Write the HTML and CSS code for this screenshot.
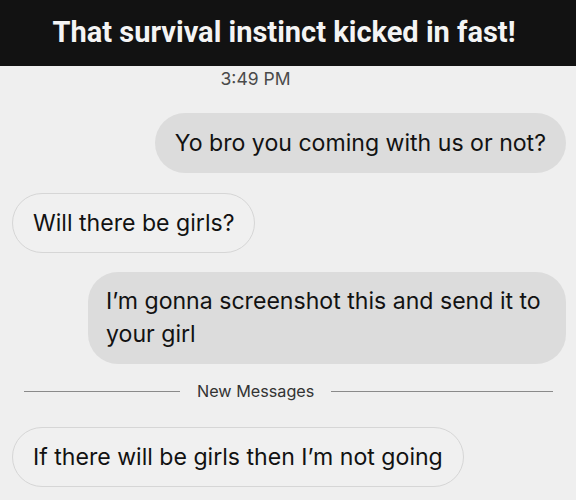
FILE: index.html
```html
<!DOCTYPE html>
<html lang="en">
<head>
    <meta charset="UTF-8">
    <meta name="viewport" content="width=device-width, initial-scale=1.0">
    <title>That survival instinct kicked in fast!</title>
    <link rel="stylesheet" href="styles.css">
</head>
<body>
    <div class="caption">That survival instinct kicked in fast!</div>

    <div class="chat">
        <div class="time">3:49 PM</div>

        <div class="row sent">
            <div class="bubble">Yo bro you coming with us or not?</div>
        </div>

        <div class="row received">
            <div class="bubble">Will there be girls?</div>
        </div>

        <div class="row sent">
            <div class="bubble wide">I’m gonna screenshot this and send it to<br>your girl</div>
        </div>

        <div class="divider">
            <span class="line left"></span>
            <span class="label">New Messages</span>
            <span class="line"></span>
        </div>

        <div class="row received">
            <div class="bubble">If there will be girls then I’m not going</div>
        </div>
    </div>
</body>
</html>
```

FILE: styles.css
```css
body {
    margin: 0;
    width: 576px;
    height: 500px;
    overflow: hidden;
    background-color: #efefef;
    font-family: Inter, 'Liberation Sans', Arial, sans-serif;
    color: #121212;
}

.caption {
    height: 66px;
    background-color: #121212;
    color: #f4f4f4;
    font-family: Roboto, 'Liberation Sans', sans-serif;
    font-weight: 700;
    font-size: 29px;
    display: flex;
    align-items: center;
    justify-content: center;
    padding: 0 8px 3px 0;
    box-sizing: border-box;
}

.chat {
    display: flex;
    flex-direction: column;
    padding: 0 10px 0 12px;
}

.time {
    font-size: 17.5px;
    color: #4a4a4a;
    text-align: center;
    margin-top: 2px;
    padding-right: 67px;
    line-height: 22px;
}

.row {
    display: flex;
}

.row.sent {
    justify-content: flex-end;
}

.row.received {
    justify-content: flex-start;
}

.bubble {
    font-size: 23.1px;
    line-height: 26px;
    padding: 17px 20px;
    border-radius: 30px;
    box-sizing: border-box;
}

.sent .bubble {
    background-color: #dcdcdc;
}

.received .bubble {
    background-color: #f0f0f0;
    border: 1px solid #d6d6d6;
    padding: 16px 20px;
}

.sent:nth-of-type(2) {
    margin-top: 23px;
}

.received {
    margin-top: 20px;
}

.bubble.wide {
    width: 478px;
    line-height: 33px;
    padding: 13px 10px 13px 18px;
}

.sent + .received + .sent {
    margin-top: 19px;
}

.divider {
    display: flex;
    align-items: center;
    gap: 17px;
    margin: 17px 13px 0 12px;
}

.divider .line {
    flex: 1;
    height: 1px;
    background-color: #8a8a8a;
}

.divider .line.left {
    flex: 0 0 156px;
}

.divider .label {
    font-size: 16.2px;
    color: #333;
}

.divider + .received {
    margin-top: 26px;
}
```
